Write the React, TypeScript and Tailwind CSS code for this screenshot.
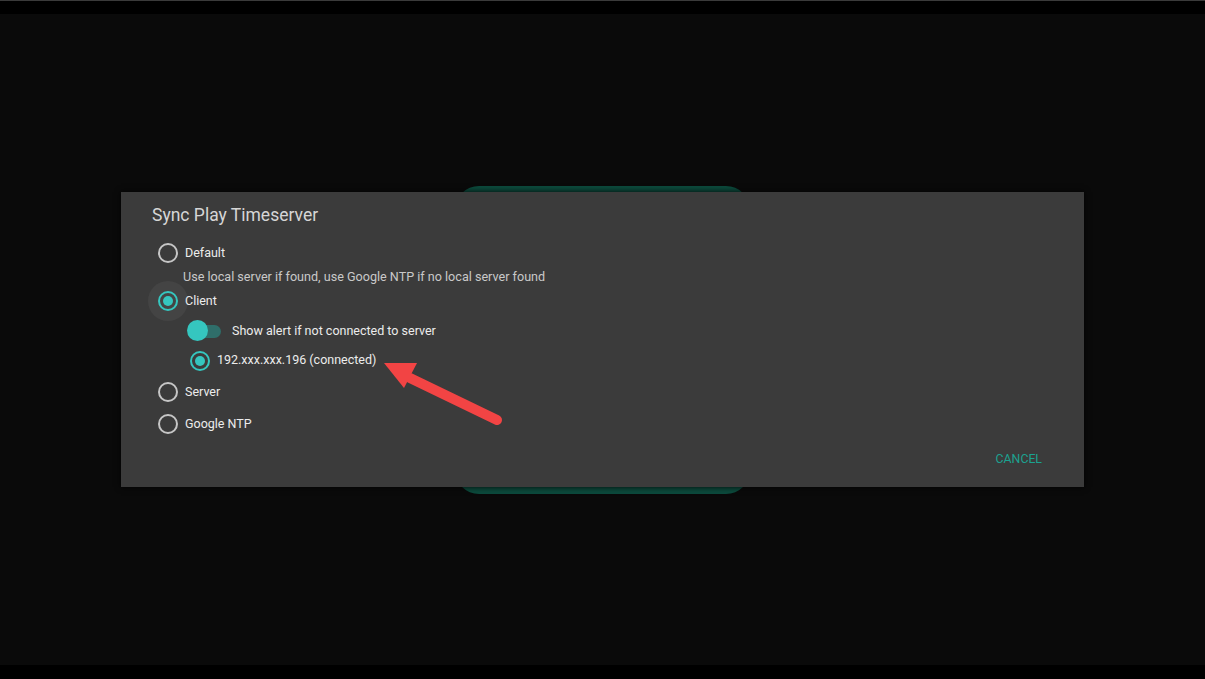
import React from "react";

const font = { fontFamily: "Roboto, 'Noto Sans', sans-serif" };

const Radio = ({ checked }: { checked?: boolean }) => (
  <span
    className={
      "flex h-[20px] w-[20px] items-center justify-center rounded-full border-2 " +
      (checked ? "border-[#35c6bf]" : "border-[#c6c6c6]")
    }
  >
    {checked && <span className="h-[10px] w-[10px] rounded-full bg-[#35c6bf]" />}
  </span>
);

const Option = ({
  label,
  checked,
  halo,
  className,
}: {
  label: string;
  checked?: boolean;
  halo?: boolean;
  className?: string;
}) => (
  <div className={"flex items-center " + (className ?? "")}>
    <span className="relative flex h-[20px] w-[20px] items-center justify-center">
      {halo && (
        <span className="absolute left-[-10px] top-[-10px] h-[40px] w-[40px] rounded-full bg-[#444444]" />
      )}
      <span className="relative">
        <Radio checked={checked} />
      </span>
    </span>
    <span className="relative ml-[7px] text-[12.5px] text-[#ececec]">{label}</span>
  </div>
);

const Toggle = () => (
  <span className="relative flex h-[22px] w-[34px] items-center">
    <span className="ml-[3px] h-[13px] w-[31px] rounded-full bg-[#2f6e6a]" />
    <span className="absolute left-0 top-0 h-[21px] w-[21px] rounded-full bg-[#35c6bf]" />
  </span>
);

const Arrow = () => (
  <svg
    className="pointer-events-none absolute left-[263px] top-[171px]"
    width="130"
    height="65"
    viewBox="0 0 130 65"
  >
    <line x1="26" y1="15" x2="113" y2="57" stroke="#f24444" strokeWidth="10" strokeLinecap="round" />
    <polygon points="0,0 33,0 20,25" fill="#f24444" />
  </svg>
);

export default function App() {
  return (
    <div className="flex h-[679px] w-full flex-col bg-black" style={font}>
      <div className="h-px bg-[#3a3a3a]" />
      <div className="h-[13px] bg-black" />
      <div className="flex flex-1 items-center justify-center bg-[#0a0a0a]">
        <div className="relative flex h-[295px] w-[963px] items-center justify-center">
          <div className="absolute left-[334px] top-[-6px] h-[308px] w-[295px] rounded-[24px] bg-[#0c4a3c]" />
          <div className="relative flex h-[295px] w-[963px] flex-col bg-[#3b3b3b] shadow-[0_0_6px_rgba(0,0,0,0.9)]">
            <div className="pl-[31px] pt-[12px] text-[17.5px] leading-[22px] text-[#d6d6d6]">
              Sync Play Timeserver
            </div>
            <div className="mt-[11px] flex flex-col pl-[37px]">
              <Option label="Default" className="h-[32px]" />
              <div className="flex h-[16px] items-center pl-[25px] text-[12.6px] text-[#c9c9c9]">
                Use local server if found, use Google NTP if no local server found
              </div>
              <Option label="Client" checked halo className="h-[32px]" />
              <div className="flex h-[28px] items-center pl-[29px]">
                <Toggle />
                <span className="ml-[11px] text-[12.5px] text-[#ececec]">
                  Show alert if not connected to server
                </span>
              </div>
              <Option label="192.xxx.xxx.196 (connected)" checked className="h-[31px] pl-[32px]" />
              <Option label="Server" className="h-[32px]" />
              <Option label="Google NTP" className="h-[32px]" />
            </div>
            <div className="mt-[7px] flex h-[24px] items-center justify-end pr-[42px]">
              <span className="text-[12.3px] text-[#1ba290]">CANCEL</span>
            </div>
            <Arrow />
          </div>
        </div>
      </div>
      <div className="h-[14px] bg-black" />
    </div>
  );
}
